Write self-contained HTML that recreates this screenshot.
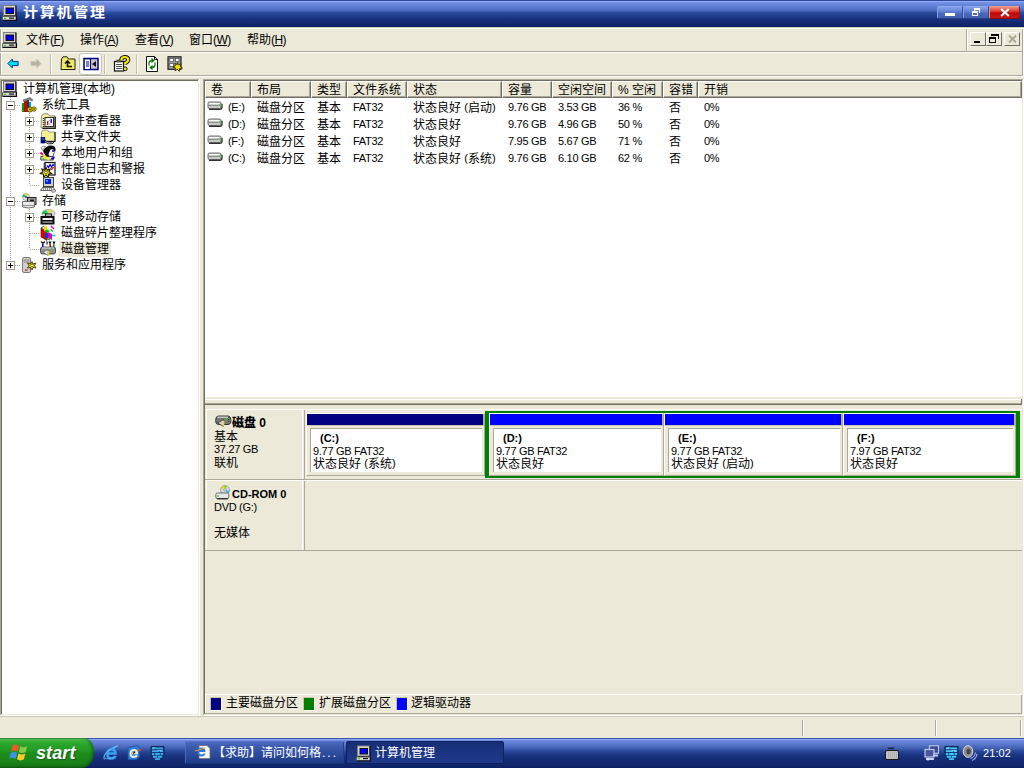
<!DOCTYPE html>
<html lang="zh-CN">
<head>
<meta charset="utf-8">
<title>计算机管理</title>
<style>
*{box-sizing:border-box;margin:0;padding:0}
html,body{width:1024px;height:768px;overflow:hidden;background:#ECE9D8}
body{position:relative;font-family:"Liberation Sans","Noto Sans CJK SC",sans-serif;font-size:12px;color:#000;line-height:1}
.a{position:absolute}
.t{position:absolute;white-space:nowrap;line-height:16px;height:16px}
.l{font-size:11px;letter-spacing:-0.3px}
.lr{position:relative;top:-1px;font-size:11px}
.mk{letter-spacing:-.6px}
.b{font-weight:bold}
.b.l{letter-spacing:0}
svg{position:absolute;overflow:visible}
/* title */
#title{left:0;top:0;width:1024px;height:27px;background:linear-gradient(to bottom,#30489A 0px,#30489A 1px,#8FABF8 1px,#8FABF8 2px,#7592E6 2px,#6684D8 5px,#5573C8 9px,#4564B8 11px,#2C4BA0 12.5px,#22408E 15px,#1B3482 18px,#12296F 23px,#0C2266 26px,#0A1F63 27px)}
#title .cap{left:23px;top:4px;color:#fff;font-weight:bold;font-size:15px;letter-spacing:1.75px;line-height:18px;height:18px;transform:scaleY(.88);transform-origin:left center}
.tb{position:absolute;top:6px;height:13px;border-radius:2px;border:1px solid;border-color:#8EA8EC #3A4E94 #2C3E84 #86A0E4;background:linear-gradient(#85A2EE,#6482D4 40%,#4A69BC 60%,#4260B2)}
.hl{position:absolute;background:#fff}
.sh{position:absolute;background:#ACA899}
.dk{position:absolute;background:#716F64}
/* tree */
#tree{left:2px;top:81px;width:196px;height:633px;background:#fff}
.ti{position:absolute;height:16px;line-height:16px;white-space:nowrap}
.pm{position:absolute;width:9px;height:9px;border:1px solid #A0A090;background:#fff}
.pm:before{content:"";position:absolute;left:1px;top:3px;width:5px;height:1px;background:#000}
.pm.p:after{content:"";position:absolute;left:3px;top:1px;width:1px;height:5px;background:#000}
.dv{position:absolute;width:1px;background-image:linear-gradient(#A8A498 50%,transparent 50%);background-size:1px 2px}
.dh{position:absolute;height:1px;background-image:linear-gradient(to right,#A8A498 50%,transparent 50%);background-size:2px 1px}
/* list */
#list{left:205px;top:81px;width:817px;height:316px;background:#fff}
.hd{position:absolute;top:0;height:17px;background:#ECE9D8;border-top:1px solid #fff;border-left:1px solid #fff;border-right:1px solid #716F64;border-bottom:1px solid #716F64;box-shadow:inset -1px -1px 0 #ACA899;line-height:17px;padding-left:5px;white-space:nowrap}
.c{position:absolute;white-space:nowrap;height:17px;line-height:17px}
/* graph */
.cell{position:absolute;border-top:1px solid #fff;border-left:1px solid #fff;border-right:1px solid #ACA899;border-bottom:1px solid #ACA899}
.bar{position:absolute;top:414px;height:11px}
.box{position:absolute;top:428px;height:44px;background:#fff;border-top:1px solid #ACA899;border-left:1px solid #ACA899}
.pt{position:absolute;white-space:nowrap;line-height:13px;height:13px}
/* taskbar */
#task{left:0;top:738px;width:1024px;height:30px;background:linear-gradient(to bottom,#3A55A8 0px,#3A55A8 1px,#8AA6F6 1px,#8AA6F6 2px,#6F8CE0 2px,#5D7ACE 6px,#4A68BB 9px,#3D5BAE 11px,#2B4A9C 13px,#1F3A88 16px,#17307A 19px,#12286E 26px,#0E2468 29px,#0A1F63 30px)}
.tk{position:absolute;top:3px;height:23px;border-radius:2px;color:#fff;line-height:22px;white-space:nowrap}

</style>
</head>
<body>
<!-- TITLE BAR -->
<div id="title" class="a">
<svg style="left:2px;top:5px" width="16" height="16" viewBox="0 0 16 16"><rect x="1.500" y=".5" width="12" height="10" fill="#D8D4CC" stroke="#808080"/><path d="M14 .5v10.500h-12" stroke="#101010" fill="none" stroke-width="1.200"/><rect x="4" y="3" width="7.500" height="5.500" fill="#0000F0" stroke="#101010" stroke-width="1"/><path d="M.5 11.500h13.500v3.500h-13.500z" fill="#E0DCD4" stroke="#606060"/><path d="M14.500 11v4.500h-14" stroke="#101010" fill="none" stroke-width="1.100"/><rect x="2" y="12.800" width="2" height="1" fill="#00D000"/><rect x="7" y="12.500" width="5" height="1.200" fill="#101010"/></svg>
<span class="a cap">计算机管理</span>
<div class="tb" style="left:937px;width:26px"><div class="a" style="left:7px;top:6px;width:10px;height:3px;background:#fff"></div></div>
<div class="tb" style="left:963px;width:26px"><div class="a" style="left:8px;top:4px;width:6px;height:5px;border:1px solid #fff;border-top-width:2px"></div><div class="a" style="left:10px;top:1px;width:6px;height:5px;border:1px solid #fff;border-top-width:2px;border-left:0;border-bottom:0"></div><div class="a" style="left:10px;top:1px;width:1px;height:3px;background:#fff"></div></div>
<div class="tb" style="left:989px;width:31px;background:linear-gradient(#F09080,#DC3A30 40%,#BE0808 55%,#C81818);border-color:#E8A090 #A01010 #900808 #E89080">
<svg style="left:10px;top:1px" width="10" height="9" viewBox="0 0 10 9"><path d="M1.200 1 L8.800 8 M8.800 1 L1.200 8" stroke="#fff" stroke-width="2.100"/></svg></div>
</div>
<!-- MENU BAR -->
<div class="a" style="left:0;top:27px;width:1024px;height:1px;background:#D6D2C2"></div>
<div class="hl" style="left:0;top:28px;width:1024px;height:1px"></div>
<div class="sh" style="left:0;top:51px;width:1022px;height:1px"></div>
<div class="hl" style="left:0;top:52px;width:1024px;height:1px"></div>
<div class="sh" style="left:966px;top:29px;width:1px;height:22px"></div>
<div class="hl" style="left:967px;top:29px;width:1px;height:22px"></div>
<div class="sh" style="left:1022px;top:29px;width:1px;height:47px"></div>
<div class="hl" style="left:1023px;top:29px;width:1px;height:47px"></div>
<svg style="left:2px;top:32px" width="16" height="16" viewBox="0 0 16 16"><rect x="1.500" y=".5" width="12" height="10" fill="#D8D4CC" stroke="#808080"/><path d="M14 .5v10.500h-12" stroke="#101010" fill="none" stroke-width="1.200"/><rect x="4" y="3" width="7.500" height="5.500" fill="#0000F0" stroke="#101010" stroke-width="1"/><path d="M.5 11.500h13.500v3.500h-13.500z" fill="#E0DCD4" stroke="#606060"/><path d="M14.500 11v4.500h-14" stroke="#101010" fill="none" stroke-width="1.100"/><rect x="2" y="12.800" width="2" height="1" fill="#00D000"/><rect x="7" y="12.500" width="5" height="1.200" fill="#101010"/></svg>
<span class="t" style="left:26px;top:32px">文件<span class="mk">(<u>F</u>)</span></span>
<span class="t" style="left:80px;top:32px">操作<span class="mk">(<u>A</u>)</span></span>
<span class="t" style="left:135px;top:32px">查看<span class="mk">(<u>V</u>)</span></span>
<span class="t" style="left:189px;top:32px">窗口<span class="mk">(<u>W</u>)</span></span>
<span class="t" style="left:247px;top:32px">帮助<span class="mk">(<u>H</u>)</span></span>
<div class="sh" style="left:0;top:29px;width:1px;height:22px"></div><div class="hl" style="left:1px;top:29px;width:1px;height:22px"></div>
<div class="sh" style="left:0;top:53px;width:1px;height:22px"></div><div class="hl" style="left:1px;top:53px;width:1px;height:22px"></div>
<!-- MDI buttons -->
<div class="a" style="left:970px;top:32px;width:16px;height:14px;border:1px solid;border-color:#fff #716F64 #716F64 #fff;background:#ECE9D8"><div class="a" style="left:3px;top:8px;width:6px;height:2px;background:#000"></div></div>
<div class="a" style="left:986px;top:32px;width:16px;height:14px;border:1px solid;border-color:#fff #716F64 #716F64 #fff;background:#ECE9D8"><div class="a" style="left:2px;top:4px;width:7px;height:6px;border:1px solid #000;border-top-width:2px"></div><div class="a" style="left:5px;top:1px;width:7px;height:5px;border:1px solid #000;border-top-width:2px;border-left:0;border-bottom:0"></div><div class="a" style="left:4px;top:1px;width:2px;height:2px;background:#000"></div></div>
<div class="a" style="left:1004px;top:32px;width:16px;height:14px;border:1px solid;border-color:#fff #716F64 #716F64 #fff;background:#ECE9D8"><svg style="left:3px;top:2px" width="9" height="8" viewBox="0 0 9 8"><path d="M1 0.5 L8 7.5 M8 0.5 L1 7.5" stroke="#ACA899" stroke-width="1.8"/></svg></div>
<!-- TOOLBAR -->
<div class="sh" style="left:0;top:75px;width:1022px;height:1px"></div>
<div class="hl" style="left:0;top:76px;width:1024px;height:1px"></div>
<div class="a" style="left:50px;top:55px;width:1px;height:19px;background:#C0BCAC"></div>
<div class="hl" style="left:51px;top:55px;width:1px;height:19px"></div>
<div class="a" style="left:104px;top:55px;width:1px;height:19px;background:#C0BCAC"></div>
<div class="hl" style="left:105px;top:55px;width:1px;height:19px"></div>
<div class="a" style="left:136px;top:55px;width:1px;height:19px;background:#C0BCAC"></div>
<div class="hl" style="left:137px;top:55px;width:1px;height:19px"></div>
<svg style="left:7px;top:58px" width="12" height="11" viewBox="0 0 16 16"><path d="M0.500 8 L7 1.500 V5 H15.500 V11 H7 V14.500z" fill="#00E0F0" stroke="#002080" stroke-width="1.300"/></svg>
<svg style="left:30px;top:58px" width="12" height="11" viewBox="0 0 16 16"><path d="M15.500 8 L9 1.500 V5 H0.500 V11 H9 V14.500z" fill="#B8B4A4" stroke="#C8C4B4" stroke-width="1"/></svg>
<svg style="left:60px;top:56px" width="16" height="16" viewBox="0 0 16 16"><path d="M1.500 3 L3 .8 h4 l1.500 2.200 h6.500 v10.500 h-14z" fill="#F0E860" stroke="#202020"/><path d="M5 7.500 l2.500 -2.500 l2.500 2.500 M7.500 5.500 v5 h4.500" stroke="#101010" fill="none" stroke-width="1.600"/></svg>
<div class="a" style="left:79px;top:53px;width:23px;height:22px;background:#fff;border:1px solid #C8C4B4;border-radius:3px"></div>
<svg style="left:83px;top:56px" width="16" height="16" viewBox="0 0 16 16"><rect x="1" y="2.500" width="14" height="11" fill="#C8C8C8" stroke="#000080" stroke-width="1.500"/><rect x="2" y="4" width="5" height="9" fill="#fff"/><path d="M3 6h3 M3 8h3 M3 10h3" stroke="#000080"/><path d="M7.500 3v10" stroke="#000080" stroke-width="1.200"/><path d="M13 5 v6 l-4 -3z" fill="#101010"/></svg>
<svg style="left:113px;top:56px" width="16" height="16" viewBox="0 0 16 16"><rect x="1.500" y="5.500" width="9" height="9.500" fill="#fff" stroke="#101010" stroke-width="1.200"/><path d="M3 8.500h6 M3 10.500h6 M3 12.500h6" stroke="#505050"/><rect x="4" y="4" width="4" height="2" fill="#808080" stroke="#101010" stroke-width=".6"/><path d="M8.300 4.500 q0 -3.500 3.400 -3.500 q3.500 0 3.500 2.800 q0 2 -3 3.200 v1.500" stroke="#101010" fill="none" stroke-width="4.200"/><path d="M8.300 4.500 q0 -3.500 3.400 -3.500 q3.500 0 3.500 2.800 q0 2 -3 3.200 v1.500" stroke="#F8E800" fill="none" stroke-width="2.200"/><circle cx="12.200" cy="12.800" r="1.900" fill="#F8E800" stroke="#101010" stroke-width="1"/></svg>
<svg style="left:144px;top:56px" width="16" height="16" viewBox="0 0 16 16"><path d="M2.500 .5 h8 l3 3 v12 h-11z" fill="#fff" stroke="#101010"/><path d="M10.500 .5 v3 h3" fill="none" stroke="#101010"/><path d="M5 7 q0 -2.500 3 -2.500 M8 3 l1.800 1.500 l-1.800 1.500z M11 9 q0 2.500 -3 2.500 M8 13 l-1.800 -1.500 l1.800 -1.500z" stroke="#008000" fill="#008000" stroke-width="1.200"/><path d="M5 7 v2.500 M11 9 v-2.500" stroke="#008000" stroke-width="1.200"/></svg>
<svg style="left:167px;top:56px" width="16" height="16" viewBox="0 0 16 16"><rect x="1" y=".8" width="13" height="12.500" fill="#A0A0A0" stroke="#202020" stroke-width="1.200"/><rect x="2.800" y="2.500" width="3.500" height="3" fill="#fff" stroke="#303030" stroke-width=".6"/><rect x="8.500" y="2.500" width="3.500" height="3" fill="#fff" stroke="#303030" stroke-width=".6"/><rect x="2.800" y="7.500" width="3.500" height="3" fill="#fff" stroke="#303030" stroke-width=".6"/><path d="M10.500 6.500 l1 2.200 l2.800 -.8 l-1.200 2.300 l2.400 1.800 l-2.800 .5 l-.3 2.800 l-2 -2 l-2.300 1.500 l.3 -2.800 l-2.500 -1 l2.500 -1.200 l-.5 -2.600 l2.200 1.500z" fill="#F0E000" stroke="#302800" stroke-width=".9"/></svg>
<!-- TREE -->
<div class="sh" style="left:0;top:79px;width:199px;height:1px"></div>
<div class="sh" style="left:0;top:79px;width:1px;height:636px"></div>
<div class="dk" style="left:1px;top:80px;width:197px;height:1px"></div>
<div class="dk" style="left:1px;top:80px;width:1px;height:634px"></div>
<div class="hl" style="left:199px;top:79px;width:1px;height:637px"></div>
<div class="hl" style="left:0;top:715px;width:200px;height:1px"></div>
<div id="tree" class="a">
<div class="dv" style="left:8px;top:16px;height:168px"></div>
<div class="dv" style="left:27px;top:32px;height:72px"></div>
<div class="dv" style="left:27px;top:128px;height:40px"></div>
<svg style="left:0px;top:0px" width="16" height="16" viewBox="0 0 16 16"><rect x="1.500" y=".5" width="12" height="10" fill="#D8D4CC" stroke="#808080"/><path d="M14 .5v10.500h-12" stroke="#101010" fill="none" stroke-width="1.200"/><rect x="4" y="3" width="7.500" height="5.500" fill="#0000F0" stroke="#101010" stroke-width="1"/><path d="M.5 11.500h13.500v3.500h-13.500z" fill="#E0DCD4" stroke="#606060"/><path d="M14.500 11v4.500h-14" stroke="#101010" fill="none" stroke-width="1.100"/><rect x="2" y="12.800" width="2" height="1" fill="#00D000"/><rect x="7" y="12.500" width="5" height="1.200" fill="#101010"/></svg>
<span class="ti" style="left:21px;top:0px">计算机管理(本地)</span>
<div class="dh" style="left:9px;top:24px;width:10px"></div>
<div class="pm" style="left:4px;top:20px"></div>
<svg style="left:19px;top:16px" width="16" height="16" viewBox="0 0 16 16"><rect x="1" y="6" width="2" height="9" fill="#00A000"/><rect x="3" y="4" width="3" height="11" fill="#D00000"/><rect x="6" y="3" width="2" height="12" fill="#303030"/><rect x="8" y="5" width="2" height="8" fill="#00A0D0"/><path d="M2 3 L9 0.5 L12 3 L11 4 L8 2.5 L3 5z" fill="#808080" stroke="#404040" stroke-width=".5"/><circle cx="9" cy="12.5" r="2.6" fill="#E8D800" stroke="#403800" stroke-width=".8"/><circle cx="13" cy="12" r="2.2" fill="#E8D800" stroke="#403800" stroke-width=".8"/><circle cx="9" cy="12.5" r=".9" fill="#403800"/><circle cx="13" cy="12" r=".8" fill="#403800"/></svg>
<span class="ti" style="left:40px;top:16px">系统工具</span>
<div class="dh" style="left:28px;top:40px;width:10px"></div>
<div class="pm p" style="left:23px;top:36px"></div>
<svg style="left:38px;top:32px" width="16" height="16" viewBox="0 0 16 16"><path d="M1.500 3 L3.500 .8 h4.500 l1.500 2 h5 v12 h-13.500z" fill="#F8F4A0" stroke="#808080" stroke-width=".9"/><path d="M15.300 3.500v11.800h-13" stroke="#202020" fill="none" stroke-width="1.200"/><rect x="5" y="4.500" width="8.500" height="9" fill="#fff" stroke="#303030" stroke-width="1.100"/><rect x="7" y="8" width="1.400" height="4" fill="#F00000"/><rect x="10.500" y="6" width="1.400" height="4" fill="#0000F0"/><path d="M8.500 7.500h2 M8.500 11h3" stroke="#B0B0B0"/><path d="M3.500 5 v9" stroke="#303030" stroke-width="1.400" stroke-dasharray="1 1"/></svg>
<span class="ti" style="left:59px;top:32px">事件查看器</span>
<div class="dh" style="left:28px;top:56px;width:10px"></div>
<div class="pm p" style="left:23px;top:52px"></div>
<svg style="left:38px;top:48px" width="16" height="16" viewBox="0 0 16 16"><path d="M1.500 3 L3 1 h4.500 l1.500 2 h6 v9 h-13.500z" fill="#F4F090" stroke="#909090" stroke-width=".9"/><path d="M15 3v9.500h-9" stroke="#202020" fill="none" stroke-width="1.200"/><rect x="1" y="8.500" width="3.800" height="5.500" fill="#0000B0" stroke="#000050" stroke-width=".7"/><path d="M1.500 10h3" stroke="#00A0A0"/><path d="M5 11 q3 3.500 9 1.500 l-1 2 q-5 1.500 -8 -1.500z" fill="#F4F4F4" stroke="#101010" stroke-width=".9"/></svg>
<span class="ti" style="left:59px;top:48px">共享文件夹</span>
<div class="dh" style="left:28px;top:72px;width:10px"></div>
<div class="pm p" style="left:23px;top:68px"></div>
<svg style="left:38px;top:64px" width="16" height="16" viewBox="0 0 16 16"><path d="M3 6 q3 -6 9 -5.500 q4 .5 3.500 5 l-3 7.500 h-6 z" fill="#080808"/><path d="M10.500 4.500 q3.500 -1 4 2 q.5 1.500 -1 2 l-1 3.500 h-3 l-1 -3z" fill="#F4F4F4"/><circle cx="13" cy="6" r="1" fill="#0000E0"/><path d="M1 2.500 q2 -2 4.500 -1 l-3 4z" fill="#E8E8E8" stroke="#606060" stroke-width=".6"/><path d="M.8 11.500 h12.500 v3.500 h-12.500z" fill="#E0E0E0" stroke="#303030" stroke-width=".9"/><rect x="2.500" y="13" width="1.500" height="1.200" fill="#00E000"/><path d="M2.500 9.500 L9 15" stroke="#F8F000" stroke-width="2.200"/><path d="M.5 7.500 L2.800 9.800" stroke="#F000B0" stroke-width="2.200"/><path d="M11 13 l4 -1.500 l-1 2.500 l-3 .5z" fill="#0000D0"/></svg>
<span class="ti" style="left:59px;top:64px">本地用户和组</span>
<div class="dh" style="left:28px;top:88px;width:10px"></div>
<div class="pm p" style="left:23px;top:84px"></div>
<svg style="left:38px;top:80px" width="16" height="16" viewBox="0 0 16 16"><rect x="5" y="1.500" width="10" height="12.500" fill="#fff" stroke="#101010" stroke-width="1.200"/><path d="M3.500 3h2 M3.500 5h2 M3.500 7h2" stroke="#101010"/><path d="M7 4.500 l1.500 2 l1.500 -3 l1.500 2.500 l1.500 -2.500 l1 1" stroke="#0000F0" fill="none" stroke-width="1.300"/><path d="M11.500 9 l1 -2 l1.500 -.5" stroke="#F00000" fill="none" stroke-width="1.300"/><path d="M6 6.500 l1.300 2.800 l2.800 -1.300 l-1 2.800 l2.500 1.700 l-3 .7 l-.3 3 l-2.300 -2 l-2.300 2 l-.3 -3 l-3 -.7 l2.500 -1.700 l-1 -2.800 l2.800 1.300z" fill="#F0E800" stroke="#181400" stroke-width="1.100"/><circle cx="6" cy="11.500" r="1.300" fill="#FFFFC0" stroke="#181400" stroke-width=".6"/></svg>
<span class="ti" style="left:59px;top:80px">性能日志和警报</span>
<div class="dh" style="left:28px;top:104px;width:10px"></div>
<svg style="left:38px;top:96px" width="16" height="16" viewBox="0 0 16 16"><rect x="3.5" y="0.500" width="10" height="9" fill="#D4D0C8" stroke="#404040"/><rect x="5" y="2" width="6" height="5" fill="#0020E0"/><rect x="6" y="3" width="2" height="1.500" fill="#60A0FF"/><path d="M2.500 10.500 h11 l2 3 h-15z" fill="#E8E8E8" stroke="#404040" stroke-width=".8"/><path d="M3 12h10" stroke="#404040" stroke-dasharray="1 1"/><ellipse cx="13.500" cy="14" rx="2" ry="1.300" fill="#E0E0E0" stroke="#606060" stroke-width=".7"/></svg>
<span class="ti" style="left:59px;top:96px">设备管理器</span>
<div class="dh" style="left:9px;top:120px;width:10px"></div>
<div class="pm" style="left:4px;top:116px"></div>
<svg style="left:19px;top:112px" width="16" height="16" viewBox="0 0 16 16"><circle cx="5" cy="4" r="3.500" fill="#E0E0E8" stroke="#808080" stroke-width=".6"/><path d="M5 4 L3 1 A3.500 3.500 0 0 1 6.500 .8z" fill="#E0E000"/><path d="M5 4 L1.500 4 A3.500 3.500 0 0 1 3 1z" fill="#00C0C0"/><circle cx="5" cy="4" r="1" fill="#404040"/><rect x="6.500" y="4.500" width="8.500" height="7" fill="#A0A0A0" stroke="#202020"/><rect x="9" y="6.500" width="4" height="3" fill="#202020"/><path d="M1.500 8.500 h12 v5.500 q-6 2 -12 0z" fill="#E8E8E8" stroke="#505050" stroke-width=".8"/><path d="M2 12.500 h11" stroke="#909090"/></svg>
<span class="ti" style="left:40px;top:112px">存储</span>
<div class="dh" style="left:28px;top:136px;width:10px"></div>
<div class="pm p" style="left:23px;top:132px"></div>
<svg style="left:38px;top:128px" width="16" height="16" viewBox="0 0 16 16"><ellipse cx="8.500" cy="4.500" rx="6.500" ry="4" fill="#D8D8E0" stroke="#808080" stroke-width=".6"/><path d="M8.500 4.500 L3 2.500 L6 .8z" fill="#00C8C8"/><path d="M8.500 4.500 L6 .8 L9 .5z" fill="#E8E000"/><path d="M8.500 4.500 L11 .8 L13 2z" fill="#E8E000"/><path d="M8.500 4.500 L2.200 5 L3 2.500z" fill="#00C000"/><rect x="0.500" y="7" width="14" height="8.500" fill="#101010"/><rect x="2.500" y="9" width="10" height="2" fill="#F0F0F0"/><rect x="2.500" y="12.500" width="10" height="1.200" fill="#B0B0B0"/><path d="M5 4.500 h7 v3 h-7z" fill="#101010"/><rect x="6" y="5.500" width="5" height="1.200" fill="#F0F0F0"/></svg>
<span class="ti" style="left:59px;top:128px">可移动存储</span>
<div class="dh" style="left:28px;top:152px;width:10px"></div>
<svg style="left:38px;top:144px" width="16" height="16" viewBox="0 0 16 16"><path d="M1 3 L1 12 L7 15.500 L7 6z" fill="#E00000" stroke="#600000" stroke-width=".6"/><path d="M4 1 h3 v5 h-3z" fill="#E8E000"/><path d="M4 6 l3 -1.500 l3 1.500 l-3 2z" fill="#00C000"/><path d="M5 8 h3 v5 h-3z" fill="#0040E0"/><path d="M8 7 l4 2 v6 l-4 -2z" fill="#E000C0"/><path d="M7 13 l3 1 v1.500 l-3 -1z" fill="#00C000"/><path d="M11 1 l3 3" stroke="#E000C0" stroke-width="1.400"/><path d="M10.500 4.500 l2.500 2" stroke="#00C000" stroke-width="1.300"/><path d="M12 10.500 h3.500" stroke="#00D0D0" stroke-width="1.600"/><path d="M1 3 l3 -2" stroke="#404040"/></svg>
<span class="ti" style="left:59px;top:144px">磁盘碎片整理程序</span>
<div class="dh" style="left:28px;top:168px;width:10px"></div>
<svg style="left:38px;top:160px" width="16" height="16" viewBox="0 0 16 16"><path d="M1 .5 l2 2 l2 -2 M7 .5 v3 M9 .5 l1 2 l1 -2 M13 .5 l1 2 l1 -2" stroke="#101010" fill="none" stroke-width="1.200"/><rect x="2" y="3" width="1.500" height="3" fill="#0000E0"/><rect x="9.500" y="3" width="1.500" height="3" fill="#E00000"/><rect x="13" y="3" width="1.500" height="3" fill="#00A000"/><path d="M0.500 8 q0 -2 2 -2 h11 q2 0 2 2 v3 q0 2 -2 2 h-11 q-2 0 -2 -2z" fill="#909090" stroke="#303030" stroke-width=".8"/><path d="M2 7 h12" stroke="#E0E0E0"/><path d="M3 11 l5 -2.500 v6z" fill="#E8E8E8" stroke="#404040" stroke-width=".5"/><rect x="8" y="10" width="1.200" height="5" fill="#E8D800"/><rect x="11" y="7.500" width="1.200" height="1.200" fill="#00E000"/></svg>
<span class="ti" style="left:59px;top:160px;background:#ECE9D8;padding:0 2px;margin-left:-2px">磁盘管理</span>
<div class="dh" style="left:9px;top:184px;width:10px"></div>
<div class="pm p" style="left:4px;top:180px"></div>
<svg style="left:19px;top:176px" width="16" height="16" viewBox="0 0 16 16"><path d="M1.500 2 q0 -1.500 1.500 -1.500 h5 q1.500 0 1.500 1.500 v12 q0 1.500 -1.500 1.500 h-5 q-1.500 0 -1.500 -1.500z" fill="#D0D0D0" stroke="#606060" stroke-width=".8"/><path d="M2.500 3h6 M2.500 5h6" stroke="#808080"/><rect x="4" y="12.500" width="2.500" height="1.200" fill="#E00000"/><path d="M11 4.500 l1 2.500 l3 -1 l-1.500 2.500 l1.500 2.500 l-3 -.5 l-1 2.500 l-1.500 -2.500 l-3 .5 l1.500 -2.500 l-1.500 -2.500 l3 1z" fill="#E8D800" stroke="#403800" stroke-width=".9"/><circle cx="11" cy="8.500" r="1.300" fill="#fff" stroke="#403800" stroke-width=".6"/></svg>
<span class="ti" style="left:40px;top:176px">服务和应用程序</span>
</div>
<!-- RIGHT PANE -->
<div class="sh" style="left:203px;top:79px;width:820px;height:1px"></div>
<div class="sh" style="left:203px;top:79px;width:1px;height:636px"></div>
<div class="dk" style="left:204px;top:80px;width:818px;height:1px"></div>
<div class="dk" style="left:204px;top:80px;width:1px;height:634px"></div>
<div class="hl" style="left:1023px;top:79px;width:1px;height:637px"></div>
<div class="hl" style="left:203px;top:715px;width:821px;height:1px"></div>
<div id="list" class="a">
<div class="hd" style="left:0px;width:46px">卷</div>
<div class="hd" style="left:46px;width:60px">布局</div>
<div class="hd" style="left:106px;width:36px">类型</div>
<div class="hd" style="left:142px;width:60px">文件系统</div>
<div class="hd" style="left:202px;width:95px">状态</div>
<div class="hd" style="left:297px;width:50px">容量</div>
<div class="hd" style="left:347px;width:60px">空闲空间</div>
<div class="hd" style="left:407px;width:51px">% 空闲</div>
<div class="hd" style="left:458px;width:35px">容错</div>
<div class="hd" style="left:493px;width:324px">开销</div>
<svg style="left:2px;top:19px" width="16" height="16" viewBox="0 0 16 16"><path d="M1 3.500 q0 -1.500 1.500 -1.500 h10 q1.500 0 1.500 1.500 v3.500 q0 1.500 -1.500 1.500 h-10 q-1.500 0 -1.500 -1.500z" fill="#C8C8C8" stroke="#505050" stroke-width=".8"/><path d="M2 3.500 h10.500" stroke="#F8F8F8"/><path d="M2 5.500 h9" stroke="#909090"/><rect x="11.500" y="4.500" width="1.200" height="1.200" fill="#00C000"/><path d="M2 9.300 h11 q1.500 0 2 -1.500 v-4" stroke="#303030" fill="none" stroke-width="1.300"/></svg>
<span class="c l" style="left:23px;top:18px">(E:)</span>
<span class="c" style="left:52px;top:19px">磁盘分区</span>
<span class="c" style="left:112px;top:19px">基本</span>
<span class="c l" style="left:148px;top:18px">FAT32</span>
<span class="c" style="left:208px;top:19px">状态良好 <span class="lr">(</span>启动<span class="lr">)</span></span>
<span class="c l" style="left:303px;top:18px">9.76 GB</span>
<span class="c l" style="left:353px;top:18px">3.53 GB</span>
<span class="c l" style="left:413px;top:18px">36 %</span>
<span class="c" style="left:464px;top:19px">否</span>
<span class="c l" style="left:499px;top:18px">0%</span>
<svg style="left:2px;top:36px" width="16" height="16" viewBox="0 0 16 16"><path d="M1 3.500 q0 -1.500 1.500 -1.500 h10 q1.500 0 1.500 1.500 v3.500 q0 1.500 -1.500 1.500 h-10 q-1.500 0 -1.500 -1.500z" fill="#C8C8C8" stroke="#505050" stroke-width=".8"/><path d="M2 3.500 h10.500" stroke="#F8F8F8"/><path d="M2 5.500 h9" stroke="#909090"/><rect x="11.500" y="4.500" width="1.200" height="1.200" fill="#00C000"/><path d="M2 9.300 h11 q1.500 0 2 -1.500 v-4" stroke="#303030" fill="none" stroke-width="1.300"/></svg>
<span class="c l" style="left:23px;top:35px">(D:)</span>
<span class="c" style="left:52px;top:36px">磁盘分区</span>
<span class="c" style="left:112px;top:36px">基本</span>
<span class="c l" style="left:148px;top:35px">FAT32</span>
<span class="c" style="left:208px;top:36px">状态良好</span>
<span class="c l" style="left:303px;top:35px">9.76 GB</span>
<span class="c l" style="left:353px;top:35px">4.96 GB</span>
<span class="c l" style="left:413px;top:35px">50 %</span>
<span class="c" style="left:464px;top:36px">否</span>
<span class="c l" style="left:499px;top:35px">0%</span>
<svg style="left:2px;top:53px" width="16" height="16" viewBox="0 0 16 16"><path d="M1 3.500 q0 -1.500 1.500 -1.500 h10 q1.500 0 1.500 1.500 v3.500 q0 1.500 -1.500 1.500 h-10 q-1.500 0 -1.500 -1.500z" fill="#C8C8C8" stroke="#505050" stroke-width=".8"/><path d="M2 3.500 h10.500" stroke="#F8F8F8"/><path d="M2 5.500 h9" stroke="#909090"/><rect x="11.500" y="4.500" width="1.200" height="1.200" fill="#00C000"/><path d="M2 9.300 h11 q1.500 0 2 -1.500 v-4" stroke="#303030" fill="none" stroke-width="1.300"/></svg>
<span class="c l" style="left:23px;top:52px">(F:)</span>
<span class="c" style="left:52px;top:53px">磁盘分区</span>
<span class="c" style="left:112px;top:53px">基本</span>
<span class="c l" style="left:148px;top:52px">FAT32</span>
<span class="c" style="left:208px;top:53px">状态良好</span>
<span class="c l" style="left:303px;top:52px">7.95 GB</span>
<span class="c l" style="left:353px;top:52px">5.67 GB</span>
<span class="c l" style="left:413px;top:52px">71 %</span>
<span class="c" style="left:464px;top:53px">否</span>
<span class="c l" style="left:499px;top:52px">0%</span>
<svg style="left:2px;top:70px" width="16" height="16" viewBox="0 0 16 16"><path d="M1 3.500 q0 -1.500 1.500 -1.500 h10 q1.500 0 1.500 1.500 v3.500 q0 1.500 -1.500 1.500 h-10 q-1.500 0 -1.500 -1.500z" fill="#C8C8C8" stroke="#505050" stroke-width=".8"/><path d="M2 3.500 h10.500" stroke="#F8F8F8"/><path d="M2 5.500 h9" stroke="#909090"/><rect x="11.500" y="4.500" width="1.200" height="1.200" fill="#00C000"/><path d="M2 9.300 h11 q1.500 0 2 -1.500 v-4" stroke="#303030" fill="none" stroke-width="1.300"/></svg>
<span class="c l" style="left:23px;top:69px">(C:)</span>
<span class="c" style="left:52px;top:70px">磁盘分区</span>
<span class="c" style="left:112px;top:70px">基本</span>
<span class="c l" style="left:148px;top:69px">FAT32</span>
<span class="c" style="left:208px;top:70px">状态良好 <span class="lr">(</span>系统<span class="lr">)</span></span>
<span class="c l" style="left:303px;top:69px">9.76 GB</span>
<span class="c l" style="left:353px;top:69px">6.10 GB</span>
<span class="c l" style="left:413px;top:69px">62 %</span>
<span class="c" style="left:464px;top:70px">否</span>
<span class="c l" style="left:499px;top:69px">0%</span>
</div>
<div class="hl" style="left:205px;top:399px;width:816px;height:1px"></div>
<div class="sh" style="left:205px;top:403px;width:817px;height:1px"></div>
<div class="dk" style="left:205px;top:404px;width:817px;height:1px"></div>
<div class="dk" style="left:1021px;top:399px;width:1px;height:5px"></div>
<div class="hl" style="left:206px;top:409px;width:816px;height:1px"></div>
<div class="hl" style="left:206px;top:409px;width:1px;height:70px"></div>
<div class="hl" style="left:302px;top:409px;width:1px;height:70px"></div>
<div class="sh" style="left:304px;top:410px;width:1px;height:69px"></div>
<div class="sh" style="left:205px;top:479px;width:817px;height:1px"></div>
<div class="hl" style="left:205px;top:480px;width:817px;height:1px"></div>
<div class="hl" style="left:206px;top:481px;width:1px;height:69px"></div>
<div class="hl" style="left:302px;top:481px;width:1px;height:69px"></div>
<div class="sh" style="left:304px;top:481px;width:1px;height:69px"></div>
<div class="sh" style="left:205px;top:550px;width:817px;height:1px"></div>
<svg style="left:215px;top:415px" width="16" height="16" viewBox="0 0 16 16"><path d="M.8 4 q0 -2.500 2.500 -3 h10 q2.500 .5 2.500 3 v3 q0 2 -2.500 2.500 h-10 q-2.500 -.5 -2.500 -2.500z" fill="#787878" stroke="#282828" stroke-width=".9"/><path d="M2.500 2.200 h10.500" stroke="#D8D8D8" stroke-width="1.200"/><path d="M13.500 2v6" stroke="#404040" stroke-dasharray="1 1"/><path d="M2.500 8 l6 -3.500 v7z" fill="#D0D0D8" stroke="#202020" stroke-width=".7"/><rect x="8" y="5.500" width="1.300" height="6" fill="#F0E000"/><rect x="10.800" y="3.500" width="1.500" height="1.500" fill="#00F000"/></svg>
<span class="pt b" style="left:232px;top:417px"><span style="font-weight:900">磁盘</span> 0</span>
<span class="pt" style="left:214px;top:431px">基本</span>
<span class="pt l" style="left:214px;top:443px">37.27 GB</span>
<span class="pt" style="left:214px;top:457px">联机</span>
<div class="a" style="left:485px;top:411px;width:535px;height:67px;border:solid #008000;border-width:2px 4px"></div>
<div class="a" style="left:306px;top:413px;width:179px;height:63px;border:1px solid;border-color:#fff #ACA899 #ACA899 #fff"></div>
<div class="a" style="left:307px;top:414px;width:177px;height:12px;background:#000080;border-right:1px solid #B8B09C;border-bottom:1px solid #C8C2AE"></div>
<div class="box" style="left:310px;width:172px"></div>
<span class="pt b l" style="left:320px;top:432px">(C:)</span>
<span class="pt l" style="left:313px;top:445px">9.77 GB FAT32</span>
<span class="pt" style="left:313px;top:458px">状态良好 <span class="lr">(</span>系统<span class="lr">)</span></span>
<div class="a" style="left:489px;top:413px;width:175px;height:63px;border:1px solid;border-color:#fff #ACA899 #ACA899 #fff"></div>
<div class="a" style="left:490px;top:414px;width:173px;height:12px;background:#0000FF;border-right:1px solid #B8B09C;border-bottom:1px solid #C8C2AE"></div>
<div class="box" style="left:493px;width:168px"></div>
<span class="pt b l" style="left:503px;top:432px">(D:)</span>
<span class="pt l" style="left:496px;top:445px">9.77 GB FAT32</span>
<span class="pt" style="left:496px;top:458px">状态良好</span>
<div class="a" style="left:664px;top:413px;width:179px;height:63px;border:1px solid;border-color:#fff #ACA899 #ACA899 #fff"></div>
<div class="a" style="left:665px;top:414px;width:177px;height:12px;background:#0000FF;border-right:1px solid #B8B09C;border-bottom:1px solid #C8C2AE"></div>
<div class="box" style="left:668px;width:172px"></div>
<span class="pt b l" style="left:678px;top:432px">(E:)</span>
<span class="pt l" style="left:671px;top:445px">9.77 GB FAT32</span>
<span class="pt" style="left:671px;top:458px">状态良好 <span class="lr">(</span>启动<span class="lr">)</span></span>
<div class="a" style="left:843px;top:413px;width:173px;height:63px;border:1px solid;border-color:#fff #ACA899 #ACA899 #fff"></div>
<div class="a" style="left:844px;top:414px;width:171px;height:12px;background:#0000FF;border-right:1px solid #B8B09C;border-bottom:1px solid #C8C2AE"></div>
<div class="box" style="left:847px;width:166px"></div>
<span class="pt b l" style="left:857px;top:432px">(F:)</span>
<span class="pt l" style="left:850px;top:445px">7.97 GB FAT32</span>
<span class="pt" style="left:850px;top:458px">状态良好</span>
<svg style="left:215px;top:485px" width="16" height="16" viewBox="0 0 16 16"><circle cx="10" cy="5" r="4.500" fill="#D8D8E0" stroke="#808080" stroke-width=".6"/><path d="M10 5 L6.500 2.500 L9 .6z" fill="#E8E000"/><path d="M10 5 L9 .6 L12 1z" fill="#80E000"/><path d="M10 5 L14.300 6 L13 8.500z" fill="#00C8E8"/><circle cx="10" cy="5" r="1.200" fill="#fff" stroke="#606060" stroke-width=".5"/><path d="M.8 9.500 q0 -1.500 1.500 -1.500 h10 q1.500 0 1.500 1.500 v2.500 q0 1.500 -1.500 1.500 h-10 q-1.500 0 -1.500 -1.500z" fill="#E8E8E8" stroke="#505050" stroke-width=".8"/><rect x="2" y="10.500" width="2" height="1" fill="#00C000"/><path d="M2 13.800h11" stroke="#202020" stroke-width="1.200"/></svg>
<span class="pt b l" style="left:232px;top:488px">CD-ROM 0</span>
<span class="pt l" style="left:214px;top:501px">DVD (G:)</span>
<span class="pt" style="left:214px;top:527px">无媒体</span>
<div class="hl" style="left:205px;top:694px;width:817px;height:1px"></div>
<div class="sh" style="left:205px;top:713px;width:817px;height:1px"></div>
<div class="sh" style="left:1021px;top:695px;width:1px;height:19px"></div>
<div class="hl" style="left:205px;top:694px;width:1px;height:19px"></div>
<div class="a" style="left:210px;top:697px;width:12px;height:14px;background:#000080;border:1px solid;border-color:#C8C4B0 #fff #fff #C8C4B0"></div>
<span class="t" style="left:226px;top:695px">主要磁盘分区</span>
<div class="a" style="left:303px;top:697px;width:12px;height:14px;background:#008000;border:1px solid;border-color:#C8C4B0 #fff #fff #C8C4B0"></div>
<span class="t" style="left:319px;top:695px">扩展磁盘分区</span>
<div class="a" style="left:396px;top:697px;width:12px;height:14px;background:#0000FF;border:1px solid;border-color:#C8C4B0 #fff #fff #C8C4B0"></div>
<span class="t" style="left:411px;top:695px">逻辑驱动器</span>
<!-- STATUS BAR -->
<div class="a" style="left:0;top:716px;width:1024px;height:1px;background:#CDCABB"></div>
<div class="sh" style="left:802px;top:720px;width:1px;height:16px"></div>
<div class="hl" style="left:803px;top:720px;width:1px;height:16px"></div>
<div class="sh" style="left:935px;top:720px;width:1px;height:16px"></div>
<div class="hl" style="left:936px;top:720px;width:1px;height:16px"></div>
<div class="sh" style="left:1020px;top:720px;width:1px;height:16px"></div>
<div class="hl" style="left:1021px;top:720px;width:1px;height:16px"></div>
<!-- TASKBAR -->
<div id="task" class="a">
<div class="a" style="left:0;top:0;width:94px;height:30px;border-radius:0 10px 12px 0/0 13px 17px 0;background:linear-gradient(to bottom,#2A7A2A 0,#55C255 1px,#38B038 3px,#29A329 7px,#239A23 13px,#1D8D1D 15px,#1A841A 24px,#177617 28px,#125E12 30px);box-shadow:inset -2px 0 3px rgba(0,60,0,.45)"></div>
<svg style="left:10px;top:5px" width="20" height="19" viewBox="0 0 19 18"><path d="M2.500 2.500 q3 -2 6 0 l-1.400 5.500 q-3 -2 -6 0z" fill="#F0582C"/><path d="M9.800 3 q3 2 6.500 0 l-1.400 5.500 q-3.500 2 -6.500 0z" fill="#84CC40"/><path d="M.8 9.500 q3 -2 6 0 l-1.400 5.500 q-3 -2 -6 0z" fill="#3C90F0"/><path d="M8.100 10 q3 2 6.500 0 l-1.400 5.500 q-3.500 2 -6.500 0z" fill="#FCCC28"/></svg>
<span class="a" style="left:36px;top:4px;color:#fff;font:italic bold 18px/22px 'Liberation Sans',sans-serif;letter-spacing:.1px;text-shadow:1px 1px 1px #1A5A1A">start</span>
<svg style="left:103px;top:7px" width="17" height="16" viewBox="0 0 17 16"><path d="M4.500 8.500 h8 q0 -4 -4 -4 q-4 0 -4 4.500 q0 4.500 4 4.500 q3 0 4 -2.500" stroke="#38A0EC" stroke-width="2.600" fill="none"/><path d="M1.500 14.500 q-2 -3 3 -8 q5 -5 10.500 -5.500 q-3 1 -5 3" stroke="#58B8F4" fill="none" stroke-width="1.100"/><path d="M2 13 q3 2 9 -1" stroke="#58B8F4" fill="none" stroke-width="1"/></svg>
<svg style="left:126px;top:7px" width="16" height="16" viewBox="0 0 16 16"><path d="M2 2.500 l9 -2 l2.500 2 v9 l-3 3 h-8.500z" fill="#2C7CD4" stroke="#1858A8" stroke-width=".8"/><path d="M6 8.300 h5 q0 -3.300 -3 -3.300 q-3.500 0 -3.500 3.500 q0 3.500 3.500 3.500 q2.300 0 3 -1.800" stroke="#F4ECC8" stroke-width="2" fill="none"/><circle cx="13.500" cy="5" r="1.300" fill="#F04820"/><path d="M7 8.500 l2 -1.500" stroke="#101010" stroke-width="1.200"/></svg>
<svg style="left:150px;top:7px" width="15" height="17" viewBox="0 0 16 17"><path d="M1 1 h14 v7.500 q0 5 -7 8 q-7 -3 -7 -8z" fill="#143C7C" stroke="#0C2858"/><path d="M2 3h12 M2 6h12 M2 9h12 M3 12h10 M5.500 14.500h5" stroke="#38A8EC" stroke-width="2"/><path d="M6 2v2 M10 5v2 M5 8v2 M11 8v2 M8 11v2" stroke="#143C7C" stroke-width="1"/><path d="M2.500 2.500h4 M8 5.500h5" stroke="#A0E0FF" stroke-width=".8"/></svg>
<div class="tk" style="left:185px;width:159px;background:linear-gradient(#4A68BC,#3654A8 35%,#2C4A9C 60%,#1D3A86);border:1px solid;border-color:#5874C4 #24408C #1A3278 #4C68B8"></div>
<svg style="left:195px;top:6px" width="16" height="16" viewBox="0 0 16 16"><path d="M4 1.500 h8 l3 3 v10 h-11z" fill="#F4F4F0" stroke="#707070" stroke-width=".8"/><path d="M10 8 H4 q0 2.500 2.500 2.500 q1.500 0 2.500 -1 h1.500 q-1 3 -4 3 q-4 0 -4 -4.500 q0 -4.500 4 -4.500 q4 0 4 4.500z" fill="#2878E0"/><path d="M0 7 l10 -3" stroke="#E8A020"/></svg>
<span class="tk" style="left:213px;top:4px">【求助】请问如何格<span style="letter-spacing:2px;margin-left:1px">...</span></span>
<div class="tk" style="left:346px;width:158px;background:linear-gradient(#172E76,#1B3582 50%,#1E3A8A);border:1px solid #10225E"></div>
<svg style="left:356px;top:7px" width="16" height="17" viewBox="0 0 16 16"><rect x="1.500" y=".5" width="12" height="10" fill="#D8D4CC" stroke="#808080"/><path d="M14 .5v10.500h-12" stroke="#101010" fill="none" stroke-width="1.200"/><rect x="4" y="3" width="7.500" height="5.500" fill="#0000F0" stroke="#101010" stroke-width="1"/><path d="M.5 11.500h13.500v3.500h-13.500z" fill="#E0DCD4" stroke="#606060"/><path d="M14.500 11v4.500h-14" stroke="#101010" fill="none" stroke-width="1.100"/><rect x="2" y="12.800" width="2" height="1" fill="#00D000"/><rect x="7" y="12.500" width="5" height="1.200" fill="#101010"/></svg>
<span class="tk" style="left:375px;top:4px">计算机管理</span>
<svg style="left:885px;top:8px" width="14" height="14" viewBox="0 0 14 14"><path d="M3 1.500 l1 1.500 l1 -1.500 l1 1.500 l1 -1.500 l1 1.500 l1 -1.500" stroke="#101010" fill="none" stroke-width=".9"/><rect x=".6" y="4.600" width="12.800" height="8.800" rx="1" fill="#F4F4F4" stroke="#181818" stroke-width="1.200"/><path d="M2.500 7h9.500 M2.500 9h9.500 M2.500 11h9.500" stroke="#303030" stroke-width="1.200" stroke-dasharray="1.200 .8"/></svg>
<svg style="left:924px;top:7px" width="16" height="16" viewBox="0 0 16 16"><rect x="5.500" y=".8" width="9" height="7.500" fill="#3C4890" stroke="#B8C0E0" stroke-width="1.200"/><rect x="1" y="4.500" width="9" height="7.500" fill="#4854A0" stroke="#C0C8E8" stroke-width="1.200"/><path d="M2 14 h8 M9 10.500 h5" stroke="#C8D0F0" stroke-width="1.800"/><circle cx="4" cy="14" r="1.500" fill="#D8E0F8"/></svg>
<svg style="left:944px;top:7px" width="15" height="17" viewBox="0 0 16 17"><path d="M1 1 h14 v7.500 q0 5 -7 8 q-7 -3 -7 -8z" fill="#143C7C" stroke="#0C2858"/><path d="M2 3h12 M2 6h12 M2 9h12 M3 12h10 M5.500 14.500h5" stroke="#40C8F4" stroke-width="2"/><path d="M6 2v2 M10 5v2 M5 8v2 M11 8v2 M8 11v2" stroke="#143C7C" stroke-width="1"/><path d="M2.500 2.500h4 M8 5.500h5" stroke="#C0F0FF" stroke-width=".8"/></svg>
<svg style="left:962px;top:7px" width="16" height="16" viewBox="0 0 16 16"><ellipse cx="6" cy="6.500" rx="4.800" ry="5.800" fill="#909090" stroke="#D8D8D8" stroke-width="1"/><ellipse cx="6.500" cy="6.500" rx="2.200" ry="3" fill="#484848"/><path d="M8 13.500 q4.500 -1 5.500 -6 M10 15.500 q4.500 -2 5 -6.500" stroke="#98A8F0" fill="none" stroke-width="1.200"/></svg>
<span class="a l" style="left:983px;top:9px;color:#fff;line-height:13px;letter-spacing:.1px">21:02</span>
</div>
</body>
</html>
